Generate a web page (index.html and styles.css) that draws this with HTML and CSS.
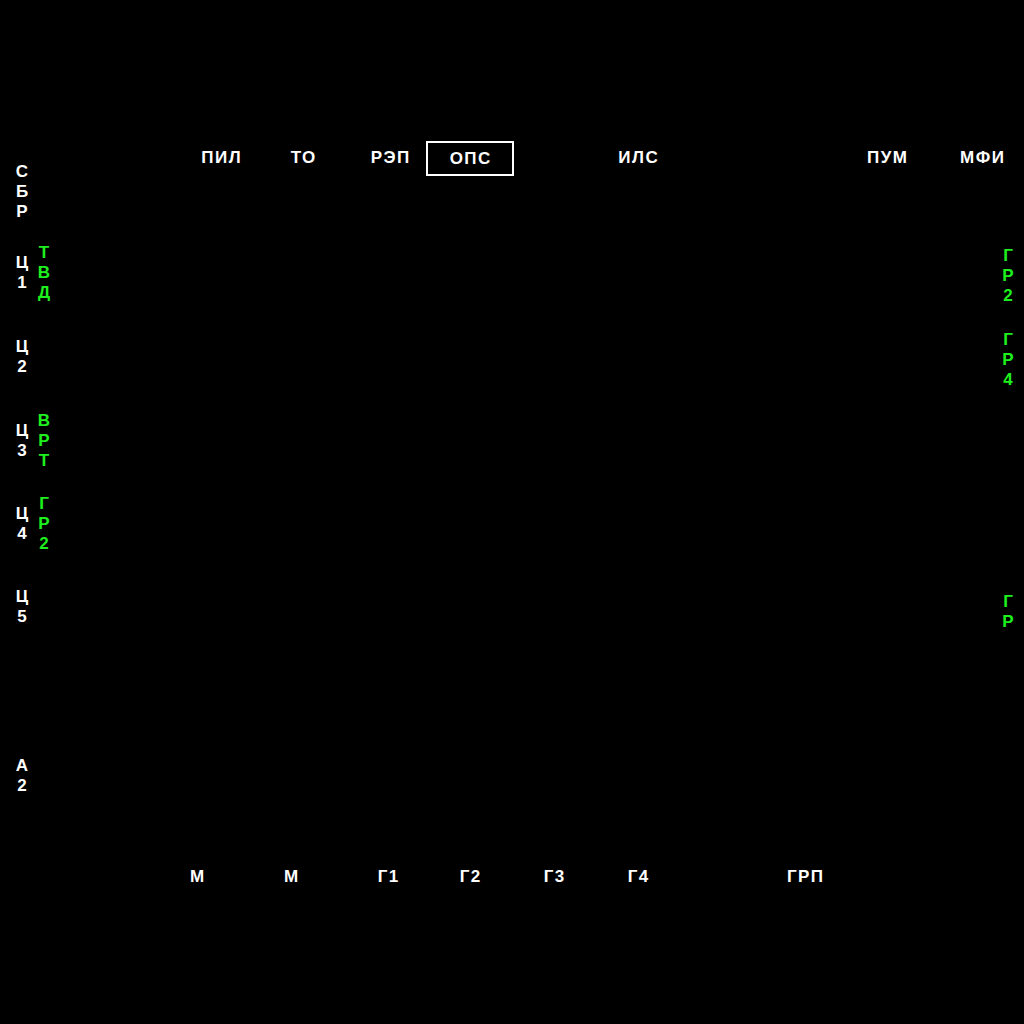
FILE: index.html
```html
<!DOCTYPE html>
<html lang="ru">
<head>
<meta charset="utf-8">
<title>МФИ</title>
<link rel="stylesheet" href="styles.css">
</head>
<body>
<div class="screen">
  <div class="top-bar">
    <div class="key k1">ПИЛ</div>
    <div class="key k2">ТО</div>
    <div class="key k3">РЭП</div>
    <div class="key k4 selected">ОПС</div>
    <div class="key k5">ИЛС</div>
    <div class="key k6">ПУМ</div>
    <div class="key k7">МФИ</div>
  </div>

  <div class="left-col">
    <div class="lrow r1"><div class="stack white">С<br>Б<br>Р</div></div>
    <div class="lrow r2"><div class="stack white">Ц<br>1</div><div class="stack green">Т<br>В<br>Д</div></div>
    <div class="lrow r3"><div class="stack white">Ц<br>2</div></div>
    <div class="lrow r4"><div class="stack white">Ц<br>3</div><div class="stack green">В<br>Р<br>Т</div></div>
    <div class="lrow r5"><div class="stack white">Ц<br>4</div><div class="stack green">Г<br>Р<br>2</div></div>
    <div class="lrow r6"><div class="stack white">Ц<br>5</div></div>
    <div class="lrow r7"></div>
    <div class="lrow r8"><div class="stack white">А<br>2</div></div>
  </div>

  <div class="right-col">
    <div class="rrow"><div class="stack green">Г<br>Р<br>2</div></div>
    <div class="rrow"><div class="stack green">Г<br>Р<br>4</div></div>
    <div class="rspacer"></div>
    <div class="rrow"><div class="stack green">Г<br>Р</div></div>
  </div>

  <div class="bottom-bar">
    <div class="key b1">М</div>
    <div class="key b2">М</div>
    <div class="key b3">Г1</div>
    <div class="key b4">Г2</div>
    <div class="key b5">Г3</div>
    <div class="key b6">Г4</div>
    <div class="key b7">ГРП</div>
  </div>
</div>
</body>
</html>
```

FILE: styles.css
```css
html, body {
  margin: 0;
  padding: 0;
  background: #000;
  overflow: hidden;
}

.screen {
  width: 1024px;
  height: 1024px;
  display: grid;
  grid-template-columns: 64px 1fr 32px;
  grid-template-rows: 140px 37px 683px 35px 1fr;
  font-family: "Liberation Sans", Arial, sans-serif;
  font-weight: bold;
  font-size: 17px;
  color: #fff;
}

.top-bar {
  grid-column: 2 / 4;
  grid-row: 2;
  display: flex;
  align-items: center;
}

.bottom-bar {
  grid-column: 2 / 4;
  grid-row: 4;
  display: flex;
  align-items: center;
}

.key {
  width: 60px;
  flex: none;
  height: 35px;
  line-height: 33px;
  text-align: center;
  letter-spacing: 1.5px;
  padding-left: 1.5px;
  box-sizing: border-box;
  white-space: nowrap;
}

.key.selected {
  width: 88px;
  border: 2px solid #fff;
  line-height: 31px;
}

.k1 { margin-left: 127px; }
.k2 { margin-left: 22px; }
.k3 { margin-left: 27px; }
.k4 { margin-left: 6px; }
.k5 { margin-left: 94px; }
.k6 { margin-left: 189px; }
.k7 { margin-left: 35px; }

.b1 { margin-left: 103px; }
.b2 { margin-left: 34px; }
.b3 { margin-left: 37px; }
.b4 { margin-left: 22px; }
.b5 { margin-left: 24px; }
.b6 { margin-left: 24px; }
.b7 { margin-left: 107px; }

.left-col {
  grid-column: 1;
  grid-row: 2 / 4;
  display: flex;
  flex-direction: column;
  padding-top: 13px;
}

.lrow {
  height: 84px;
  display: flex;
  align-items: center;
  padding-left: 12px;
  gap: 2px;
  flex: none;
}

.lrow.r1 { height: 77px; }
.lrow.r2 { height: 85px; }
.lrow.r5 { height: 82px; }
.lrow.r7 { height: 85px; }

.stack {
  width: 20px;
  line-height: 20px;
  text-align: center;
}

.white { color: #fff; }
.green { color: #1ef01e; }

.right-col {
  grid-column: 3;
  grid-row: 3;
  display: flex;
  flex-direction: column;
  padding-top: 57px;
}

.rrow {
  height: 84px;
  display: flex;
  align-items: center;
  justify-content: center;
  flex: none;
}

.rrow .stack { width: 32px; }

.rspacer {
  height: 168px;
  flex: none;
}
```
